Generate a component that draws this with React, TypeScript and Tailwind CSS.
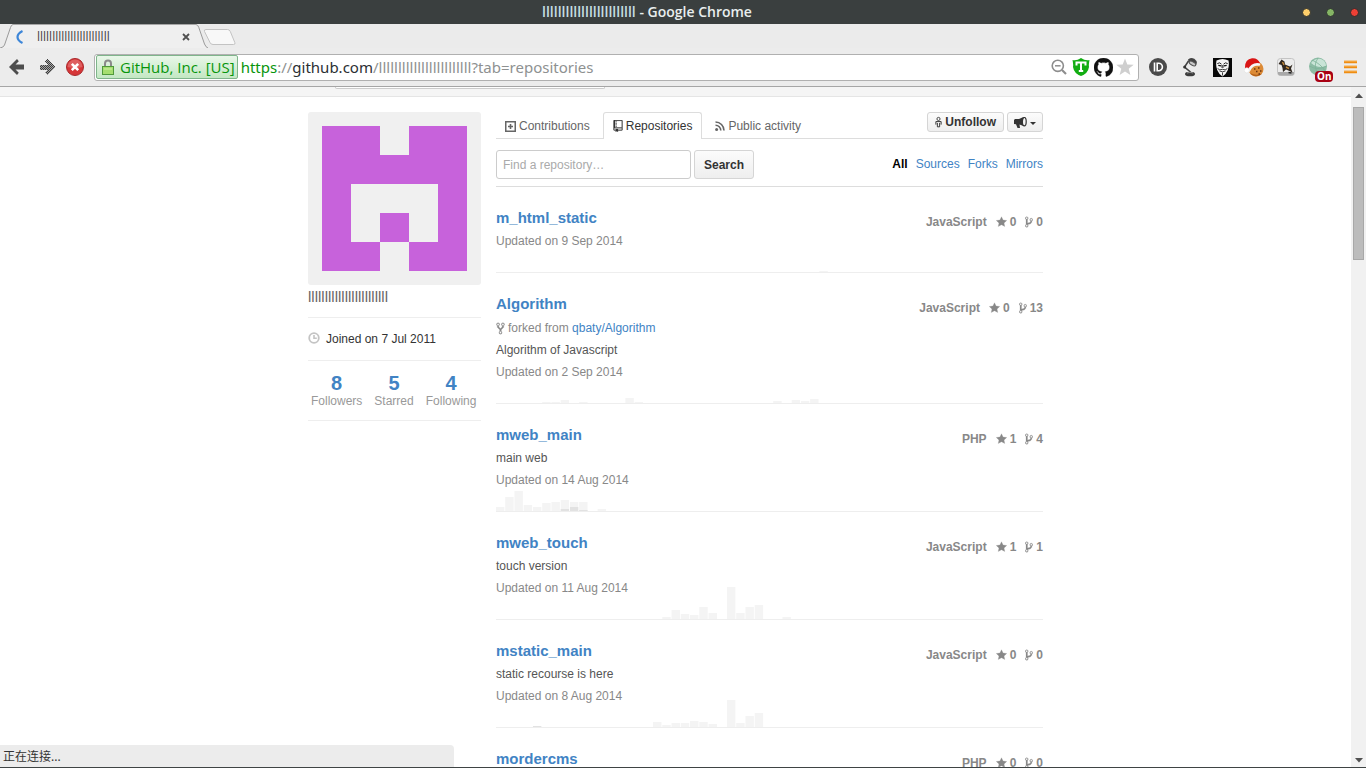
import React from "react";

const USER = "llllllllllllllllllllllll";

type Bar = [slot: number, height: number];
type Repo = {
  name: string;
  forkedFrom?: string;
  description?: string;
  updated: string;
  language: string;
  stars: number;
  forks: number;
  commits: Bar[];
  own?: Bar[];
};

const REPOS: Repo[] = [
  { name: "m_html_static", updated: "9 Sep 2014", language: "JavaScript", stars: 0, forks: 0, commits: [[35, 1]] },
  {
    name: "Algorithm",
    forkedFrom: "qbaty/Algorithm",
    description: "Algorithm of Javascript",
    updated: "2 Sep 2014",
    language: "JavaScript",
    stars: 0,
    forks: 13,
    commits: [[5, 1], [6, 1], [7, 3], [9, 1], [14, 5], [15, 1], [30, 2], [32, 3], [33, 2], [34, 4]],
  },
  {
    name: "mweb_main",
    description: "main web",
    updated: "14 Aug 2014",
    language: "PHP",
    stars: 1,
    forks: 4,
    commits: [[0, 4], [1, 14], [2, 20], [3, 6], [4, 4], [5, 8], [6, 9], [7, 11], [8, 9], [9, 9], [11, 2]],
    own: [[7, 2], [8, 4], [9, 1]],
  },
  {
    name: "mweb_touch",
    description: "touch version",
    updated: "11 Aug 2014",
    language: "JavaScript",
    stars: 1,
    forks: 1,
    commits: [[18, 2], [19, 9], [20, 5], [21, 4], [22, 12], [23, 6], [25, 32], [26, 6], [27, 12], [28, 14], [31, 2]],
  },
  {
    name: "mstatic_main",
    description: "static recourse is here",
    updated: "8 Aug 2014",
    language: "JavaScript",
    stars: 0,
    forks: 0,
    commits: [[17, 5], [18, 2], [19, 4], [20, 4], [21, 6], [22, 5], [23, 3], [25, 27], [26, 4], [27, 11], [28, 14]],
    own: [[4, 1]],
  },
  { name: "mordercms", updated: "5 Aug 2014", language: "PHP", stars: 0, forks: 0, commits: [] },
];

const BRANCH =
  "M10 5c0-1.11-.89-2-2-2a1.993 1.993 0 0 0-1 3.72v.3c-.02.52-.23.98-.63 1.38-.4.4-.86.61-1.38.63-.83.02-1.48.16-2 .45V4.72a1.993 1.993 0 0 0-1-3.72C.88 1 0 1.89 0 3a2 2 0 0 0 1 1.72v6.56c-.59.35-1 .99-1 1.72 0 1.11.89 2 2 2 1.11 0 2-.89 2-2 0-.53-.2-1-.53-1.36.09-.06.48-.41.59-.47.25-.11.56-.17.94-.17 1.05-.05 1.95-.45 2.75-1.25S8.95 7.77 9 6.73h-.02C9.59 6.37 10 5.73 10 5zM2 1.8c.66 0 1.2.55 1.2 1.2 0 .65-.55 1.2-1.2 1.2C1.35 4.2.8 3.65.8 3c0-.65.55-1.2 1.2-1.2zm0 12.41c-.66 0-1.2-.55-1.2-1.2 0-.65.55-1.2 1.2-1.2.65 0 1.2.55 1.2 1.2 0 .65-.55 1.2-1.2 1.2zm6-8c-.66 0-1.2-.55-1.2-1.2 0-.65.55-1.2 1.2-1.2.65 0 1.2.55 1.2 1.2 0 .65-.55 1.2-1.2 1.2z";
const FORK =
  "M8 1a1.993 1.993 0 0 0-1 3.72V6L5 8 3 6V4.72A1.993 1.993 0 0 0 2 1a1.993 1.993 0 0 0-1 3.72V6.5l3 3v1.78A1.993 1.993 0 0 0 5 15a1.993 1.993 0 0 0 1-3.72V9.5l3-3V4.72A1.993 1.993 0 0 0 8 1zM2 4.2C1.34 4.2.8 3.65.8 3c0-.65.55-1.2 1.2-1.2.65 0 1.2.55 1.2 1.2 0 .65-.55 1.2-1.2 1.2zm3 10c-.66 0-1.2-.55-1.2-1.2 0-.65.55-1.2 1.2-1.2.65 0 1.2.55 1.2 1.2 0 .65-.55 1.2-1.2 1.2zm3-10c-.66 0-1.2-.55-1.2-1.2 0-.65.55-1.2 1.2-1.2.65 0 1.2.55 1.2 1.2 0 .65-.55 1.2-1.2 1.2z";
const STAR = "M14 6l-4.9-.64L7 1 4.9 5.36 0 6l3.6 3.26L2.67 14 7 11.67 11.33 14l-.93-4.74L14 6z";
const REPO =
  "M4 9H3V8h1v1zm0-3H3v1h1V6zm0-2H3v1h1V4zm0-2H3v1h1V2zm8-1v12c0 .55-.45 1-1 1H6v2l-1.5-1.5L3 16v-2H1c-.55 0-1-.45-1-1V1c0-.55.45-1 1-1h10c.55 0 1 .45 1 1zm-1 10H1v2h2v-1h3v1h5v-2zm0-10H2v9h9V1z";
const MARK =
  "M8 0C3.58 0 0 3.58 0 8c0 3.54 2.29 6.53 5.47 7.59.4.07.55-.17.55-.38 0-.19-.01-.82-.01-1.49-2.01.37-2.53-.49-2.69-.94-.09-.23-.48-.94-.82-1.13-.28-.15-.68-.52-.01-.53.63-.01 1.08.58 1.23.82.72 1.21 1.87.87 2.33.66.07-.52.28-.87.51-1.07-1.78-.2-3.64-.89-3.64-3.95 0-.87.31-1.59.82-2.15-.08-.2-.36-1.02.08-2.12 0 0 .67-.21 2.2.82.64-.18 1.32-.27 2-.27.68 0 1.36.09 2 .27 1.53-1.04 2.2-.82 2.2-.82.44 1.1.16 1.92.08 2.12.51.56.82 1.27.82 2.15 0 3.07-1.87 3.75-3.65 3.95.29.25.54.73.54 1.48 0 1.07-.01 1.93-.01 2.2 0 .21.15.46.55.38A8.013 8.013 0 0 0 16 8c0-4.42-3.58-8-8-8z";

function Glyph({ d, w, className }: { d: string; w: number; className: string }) {
  return (
    <svg
      viewBox={`0 0 ${w} 16`}
      className={className}
      fill="currentColor"
      stroke="currentColor"
      strokeWidth=".3"
      aria-hidden="true"
    >
      <path d={d} />
    </svg>
  );
}

function TitleBar() {
  return (
    <header className="flex h-6 shrink-0 items-center bg-[#3a3f3f]">
      <h1 className="flex-1 text-center font-['Open_Sans',sans-serif] text-sm leading-6 font-semibold text-[#e8eeee]">
        <span className="text-[#c3dde0]">{USER}</span> - Google Chrome
      </h1>
      <div className="flex">
        {[
          ["Minimize", "bg-[#ffcf6b]"],
          ["Maximize", "bg-[#85b565]"],
          ["Close", "bg-[#ee4035]"],
        ].map(([label, color]) => (
          <button key={label} aria-label={label} className="flex h-6 w-6 items-center justify-center">
            <span className={`size-[9px] rounded-full border border-[#2a2e2e] ${color}`} />
          </button>
        ))}
      </div>
    </header>
  );
}

function TabStrip() {
  return (
    <div className="flex h-6 shrink-0 bg-[#ebebeb]">
      <svg viewBox="0 0 13 24" className="h-6 w-[13px]" aria-hidden="true">
        <path d="M0 24Q3.500 23.500 4.500 21L10.500 3.500Q11.300 1 13 .5V24z" fill="#efefef" />
        <path d="M0 24Q3.500 23.500 4.500 21L10.500 3.500Q11.300 .8 13 .5" fill="none" stroke="#9a9a9a" />
      </svg>
      <div className="flex w-[183px] items-center border-t border-[#a5a5a5] bg-[#efefef]">
        <svg viewBox="0 0 8 14" className="ml-[3px] h-[14px] w-2" aria-hidden="true">
          <path d="M6.500 1Q1.500 3.500 1.500 7t5 6" fill="none" stroke="#3d86d8" strokeWidth="2.200" />
        </svg>
        <span className="ml-[13px] flex-1 font-['Open_Sans',sans-serif] text-xs leading-5 text-[#444]">{USER}</span>
        <button aria-label="Close tab" className="mr-[3px] flex size-[14px] items-center justify-center">
          <svg viewBox="0 0 8 8" className="size-2" aria-hidden="true">
            <path d="M1 1l6 6M7 1L1 7" stroke="#505050" strokeWidth="1.800" />
          </svg>
        </button>
      </div>
      <svg viewBox="0 0 42 24" className="h-6 w-[42px]" aria-hidden="true">
        <path d="M0 .5Q2 1 2.800 3.500L8.500 20Q10 23.500 12 24H0z" fill="#efefef" />
        <path d="M0 .5Q2 .8 2.800 3.500L8.500 20Q10 23.500 12 24" fill="none" stroke="#9a9a9a" />
        <path
          d="M10 5.500h21.500q2 0 2.800 2l4.500 11q.9 2-1.300 2H17q-2.200 0-3-2L8.500 7.500q-.8-2 1.500-2z"
          fill="#f8f8f8"
          stroke="#c3c3c3"
        />
      </svg>
    </div>
  );
}

function Extensions() {
  const cell = "flex h-6 w-8 items-center justify-center";
  return (
    <div className="ml-[3px] flex">
      <button aria-label="Reader" className={cell}>
        <svg viewBox="0 0 18 18" className="size-[18px]">
          <circle cx="9" cy="9" r="9" fill="#4a4a4a" />
          <path d="M5.500 4.500v9" stroke="#fff" strokeWidth="1.600" />
          <path d="M9 5.200h.6a3.800 3.800 0 0 1 0 7.600H8.200V5.200z" fill="none" stroke="#fff" strokeWidth="1.600" />
        </svg>
      </button>
      <button aria-label="Lamp" className={cell}>
        <svg viewBox="0 0 18 20" className="h-5 w-[18px]">
          <path d="M7 2.500q5-3.500 8.500 1.500 1 3-1 4.500L7.500 5z" fill="#444" />
          <ellipse cx="11.500" cy="6.500" rx="3.600" ry="1.700" fill="#c9c9c9" stroke="#555" transform="rotate(28 11.500 6.500)" />
          <path d="M7.500 4L3.500 10l6 5" fill="none" stroke="#444" strokeWidth="1.600" />
          <circle cx="3.700" cy="10" r="1.500" fill="#333" />
          <ellipse cx="9" cy="17" rx="5" ry="2.300" fill="#3c3c3c" />
          <path d="M6 16q3-1.500 6 0" fill="none" stroke="#aaa" strokeWidth=".8" />
        </svg>
      </button>
      <button aria-label="Mask" className={cell}>
        <svg viewBox="0 0 19 19" className="size-[19px]">
          <path fill="#080808" d="M0 0h19v19H0z" />
          <path d="M3.500 2.500Q9.500-.5 15.500 2.500q1 5.500-.8 9.800-1.700 4.200-5.200 6.200-3.500-2-5.200-6.200-1.800-4.300-.8-9.800z" fill="#f4f4f4" />
          <path d="M4.300 5.600q2.500-1.800 4.200.6M14.700 5.600q-2.500-1.800-4.200.6" fill="none" stroke="#111" strokeWidth=".9" />
          <path d="M5.300 7.400l2.900.5M10.800 7.900l2.900-.5" stroke="#111" strokeWidth="1.100" />
          <path d="M9 7v3M10 7v3M4.600 10.500q2 2.300 4.900.8 2.900 1.500 4.900-.8M6.500 13q3 1.600 6 0M9.500 14.500v3" fill="none" stroke="#111" strokeWidth=".8" />
        </svg>
      </button>
      <button aria-label="Cookies" className={cell}>
        <svg viewBox="0 0 20 19" className="h-[19px] w-5">
          <circle cx="12" cy="11" r="7.500" fill="#dc8a35" />
          <path d="M6 15a7.500 7.500 0 0 0 12 .5q-6 2.500-12-.5z" fill="#b5621b" />
          <path d="M10 11h1.500M14 10h1.500M12 13.500h1.500M16 13h1.500M14.500 16h1.500" stroke="#6b3510" strokeWidth="1.400" />
          <path d="M1 10.500Q.5 1.500 8 .3q5.500-.6 8 4.700L12 8Q7 7 4.500 11.500z" fill="#d91414" />
          <path d="M15 6.500Q8 5.500 5 12.500" fill="none" stroke="#f6f6f6" strokeWidth="2.600" strokeLinecap="round" />
          <circle cx="2.800" cy="12.300" r="2.600" fill="#fff" stroke="#ddd" strokeWidth=".6" />
        </svg>
      </button>
      <button aria-label="Dog" className={cell}>
        <svg viewBox="0 0 18 18" className="size-[18px]">
          <rect x=".5" y=".5" width="17" height="17" rx="3" fill="#ececec" stroke="#c4c4c4" />
          <path d="M1 14h16v1.500q0 2-2 2H3q-2 0-2-2z" fill="#a9a9a9" />
          <path d="M4.500 1.500l3 2 .5 3 5 2 2.500-2-1.500 4 1.500 4-3-1.500-3.500-1.500L6 14l-.5-4-1-3-3-1z" fill="#30271f" />
          <path d="M5.500 4l1.500 3M9 9l3 1.500" stroke="#c58a3a" strokeWidth="1.400" />
          <path d="M11.500 14.500l3 .5" stroke="#222" strokeWidth="1.300" />
        </svg>
      </button>
      <button aria-label="Proxy on" className={`${cell} relative`}>
        <svg viewBox="0 0 20 20" className="size-5">
          <circle cx="10" cy="9.500" r="9" fill="#8dbca5" />
          <path d="M3 6q4-5 10-4 5 2 5 7-8 3-15-3z" fill="#c9e4d7" />
          <path d="M1.500 9q8 5 17 0M10 1q-6 8 1 17M4 3q9 4 13 11" fill="none" stroke="#7db398" strokeWidth=".8" />
        </svg>
        <span className="absolute top-4 left-[13px] rounded-sm bg-[#a80013] px-[2px] text-[10px] leading-[11px] font-bold text-white">
          On
        </span>
      </button>
      <button aria-label="Menu" className={cell}>
        <svg viewBox="0 0 13 14" className="h-[14px] w-[13px]">
          <path d="M0 2h13M0 7h13M0 12h13" stroke="#ef8d12" strokeWidth="2.600" />
          <path d="M0 1.200h13M0 6.200h13M0 11.200h13" stroke="#f7b65c" strokeWidth=".8" />
        </svg>
      </button>
    </div>
  );
}

function Toolbar() {
  return (
    <div className="flex h-[39px] shrink-0 items-center border-b border-[#a6a6a6] bg-[#ececec] pl-2">
      <button aria-label="Back" className="flex h-6 w-[17px] items-center justify-center">
        <svg viewBox="0 0 16 16" className="size-4">
          <path d="M0 8l8-8 1.800 2.300-3.300 3.200H15v5H6.500l3.300 3.200L8 16z" fill="#4d4d4d" />
        </svg>
      </button>
      <button aria-label="Forward" className="ml-[13px] flex h-6 w-[17px] items-center justify-center">
        <svg viewBox="0 0 16 16" className="size-4" shapeRendering="crispEdges">
          <defs>
            <pattern id="dither" width="2" height="2" patternUnits="userSpaceOnUse">
              <path d="M0 0h2v2H0z" fill="#a5a5a5" />
              <path d="M0 0h1v1H0zM1 1h1v1H1z" fill="#3d3d3d" />
            </pattern>
          </defs>
          <path d="M16 8L8 0 6.200 2.300l3.300 3.200H1v5h8.500l-3.300 3.200L8 16z" fill="url(#dither)" />
        </svg>
      </button>
      <button aria-label="Stop" className="ml-[11px] flex size-[18px] items-center justify-center">
        <svg viewBox="0 0 18 18" className="size-[18px]">
          <circle cx="9" cy="9" r="8.500" fill="#d63638" stroke="#a8282a" />
          <path d="M1.500 9a7.500 7.500 0 0 1 15 0q-7.500 2-15 0z" fill="#df5f60" />
          <path d="M5.800 5.800l6.400 6.400M12.200 5.800l-6.400 6.400" stroke="#fff" strokeWidth="2.600" />
        </svg>
      </button>
      <div className="ml-[10px] flex h-[27px] flex-1 items-center rounded-[3px] border border-[#b0b0b0] bg-white pr-[2px] pl-px text-[15px]">
        <button className="flex h-6 items-center rounded-[2px] border border-[#7fb58b] bg-linear-to-b from-[#e9f7e9] to-[#c3e7c3] pr-[2px] pl-[5px] font-['Open_Sans',sans-serif] leading-5 text-[#07950b]">
          <svg viewBox="0 0 12 16" className="mr-[6px] h-4 w-3" aria-hidden="true">
            <path d="M3 8V4.500a3 3 0 0 1 6 0V8" fill="none" stroke="#8b8b8b" strokeWidth="2" />
            <rect x=".5" y="7.500" width="11" height="8" fill="#a5de6f" stroke="#4f9a3a" />
            <path d="M2 10h8" stroke="#cdf2a8" />
          </svg>
          GitHub, Inc. [US]
        </button>
        <div
          role="textbox"
          aria-label="Address"
          contentEditable
          suppressContentEditableWarning
          className="ml-[3px] min-w-0 flex-1 overflow-hidden leading-6 whitespace-nowrap text-[#8e9191] outline-none"
        >
          <span className="text-[#07950b]">https</span>://<span className="text-[#2b2f33]">github.com</span>/{USER}
          ?tab=repositories
        </div>
        <button aria-label="Zoom" className="flex w-[22px] justify-center">
          <svg viewBox="0 0 16 16" className="size-4">
            <circle cx="6.800" cy="6.800" r="5.600" fill="none" stroke="#8d8d8d" strokeWidth="1.600" />
            <path d="M4 6.800h5.600" stroke="#8d8d8d" strokeWidth="1.500" />
            <path d="M11 11l4 4" stroke="#8d8d8d" strokeWidth="2.200" />
          </svg>
        </button>
        <button aria-label="Shield" className="flex w-[22px] justify-center">
          <svg viewBox="0 0 18 18" className="size-[18px]">
            <path d="M.5 2Q5 2.800 9 0q4 2.800 8.500 2Q16.500 7 17 9q-1 6.500-8 9-7-2.500-8-9Q1.500 7 .5 2z" fill="#12ad12" />
            <path d="M4.500 7.500v-3h9v3M9 5v7.500M6.800 13h4.400" fill="none" stroke="#fff" strokeWidth="2" />
          </svg>
        </button>
        <button aria-label="GitHub" className="flex w-[22px] justify-center text-[#111]">
          <Glyph d={MARK} w={16} className="size-[19px]" />
        </button>
        <button aria-label="Bookmark" className="flex w-[22px] justify-center">
          <svg viewBox="0 0 18 18" className="size-[18px]">
            <path d="M9 .5l2.300 6 6.400.3-5 4 1.700 6.200L9 13.500 3.600 17l1.700-6.200-5-4 6.400-.3z" fill="#cfcfcf" />
          </svg>
        </button>
      </div>
      <Extensions />
    </div>
  );
}

const IDENTICON = ["11011", "11111", "10001", "10101", "11011"];

function Sidebar() {
  return (
    <aside className="w-[173px] shrink-0">
      <svg viewBox="0 0 420 420" className="block size-[173px] rounded-[3px] bg-[#f0f0f0]" role="img" aria-label="Avatar" shapeRendering="crispEdges">
        {IDENTICON.flatMap((row, y) =>
          [...row].map((c, x) =>
            c === "1" ? <rect key={`${x}-${y}`} x={35 + x * 70} y={35 + y * 70} width="70" height="70" fill="#c762db" /> : null,
          ),
        )}
      </svg>
      <p className="border-b border-[#eee] pt-[2px] pb-[10px] text-[15px] leading-5 text-[#666]">{USER}</p>
      <p className="flex h-[43px] items-center border-b border-[#eee] text-[#333]">
        <svg viewBox="0 0 12 12" className="mr-[6px] mb-[3px] size-3" aria-hidden="true">
          <circle cx="6" cy="6" r="4.800" fill="none" stroke="#c4c4c4" strokeWidth="1.800" />
          <path d="M6 3v3.200h2.800" fill="none" stroke="#c4c4c4" strokeWidth="1.600" />
        </svg>
        Joined on 7 Jul 2011
      </p>
      <div className="flex gap-3 border-b border-[#eee] px-[3px] pt-3 pb-[10px] text-center">
        {[
          ["8", "Followers"],
          ["5", "Starred"],
          ["4", "Following"],
        ].map(([n, label]) => (
          <a key={label} href="#" className="text-[#999]">
            <strong className="block text-xl leading-5 text-[#4183c4]">{n}</strong>
            <span className="block leading-[17px]">{label}</span>
          </a>
        ))}
      </div>
    </aside>
  );
}

const smallButton =
  "flex h-5 items-center rounded-[3px] border border-[#d5d5d5] bg-linear-to-b from-[#fcfcfc] to-[#eee] font-bold text-[#333]";

function ProfileNav() {
  return (
    <div className="flex h-[27px] items-start justify-between border-b border-[#ddd]">
      <nav className="flex gap-[3px] text-[#666]">
        <a href="#" className="flex h-[27px] items-center border-x border-transparent px-2 pt-px">
          <svg viewBox="0 0 11 11" className="mr-[3px] size-[11px]" aria-hidden="true">
            <path d="M.75.75h9.500v9.500H.75z" fill="none" stroke="currentColor" strokeWidth="1.500" />
            <path d="M5.500 3v5M3 5.500h5" stroke="currentColor" strokeWidth="1.600" />
          </svg>
          Contributions
        </a>
        <a href="#" className="ml-px flex h-[27px] items-center rounded-t-[3px] border border-b-0 border-[#ddd] bg-white px-[9px] text-[#333]">
          <Glyph d={REPO} w={12} className="mr-[3px] h-3 w-[10px]" />
          Repositories
        </a>
        <a href="#" className="flex h-[27px] items-center border-x border-transparent px-[9px] pt-px">
          <svg viewBox="0 0 10 10" className="mr-[3px] size-[10px]" aria-hidden="true">
            <circle cx="1.600" cy="8.400" r="1.500" fill="currentColor" />
            <path d="M.5 4.200a5.300 5.300 0 0 1 5.300 5.300M.5 1a8.500 8.500 0 0 1 8.500 8.500" fill="none" stroke="currentColor" strokeWidth="1.600" />
          </svg>
          Public activity
        </a>
      </nav>
      <div className="flex gap-[3px]">
        <button className={`${smallButton} px-[7px]`}>
          <svg viewBox="0 0 8 12" className="mr-[3px] h-3 w-[7px]" aria-hidden="true">
            <circle cx="4" cy="2.500" r="1.800" fill="none" stroke="#333" />
            <path d="M1 9V5.500h6V9M2.700 7v4.500h2.600V7" fill="none" stroke="#333" strokeWidth="1.100" />
          </svg>
          Unfollow
        </button>
        <button aria-label="Report" className={`${smallButton} px-[6px]`}>
          <svg viewBox="0 0 13 11" className="h-[11px] w-[13px]" aria-hidden="true">
            <path d="M0 3l1-1 4 0L9.500 0q-1.500 4.500 0 9L5.500 7.500 6 11H3.500L2 7.300 0 7z" fill="#333" />
            <ellipse cx="10.300" cy="4.700" rx="1.900" ry="4.200" fill="none" stroke="#333" strokeWidth="1.200" />
          </svg>
          <svg viewBox="0 0 6 3" className="mt-[2px] ml-[3px] h-[3px] w-[6px]" aria-hidden="true">
            <path d="M0 0h6L3 3z" fill="#333" />
          </svg>
        </button>
      </div>
    </div>
  );
}

function Filters() {
  return (
    <form className="flex h-12 items-start border-b border-[#ddd] pt-[11px]" onSubmit={(e) => e.preventDefault()}>
      <input
        type="text"
        aria-label="Find a repository"
        placeholder="Find a repository…"
        className="h-[29px] w-[195px] rounded-[3px] border border-[#ccc] px-[6px] text-[#333] placeholder:text-[#aaa]"
      />
      <button className="ml-[3px] h-[29px] rounded-[3px] border border-[#d5d5d5] bg-linear-to-b from-[#fcfcfc] to-[#eee] px-[9px] font-bold text-[#333]">
        Search
      </button>
      <div className="ml-auto flex gap-2 pt-1 leading-5 text-[#4183c4]">
        <a href="#" className="font-bold text-black">All</a>
        <a href="#">Sources</a>
        <a href="#">Forks</a>
        <a href="#">Mirrors</a>
      </div>
    </form>
  );
}

function Activity({ commits, own = [] }: { commits: Bar[]; own?: Bar[] }) {
  const draw = (bars: Bar[], fill: string) =>
    bars.map(([slot, h]) => <rect key={`${fill}${slot}`} x={slot * 9.24} y={40 - h} width="8.4" height={h} fill={fill} />);
  return (
    <svg viewBox="0 0 547 40" preserveAspectRatio="none" className="absolute bottom-0 left-0 h-10 w-full" aria-hidden="true">
      {draw(commits, "#f4f4f4")}
      {draw(own, "#e2e2e2")}
    </svg>
  );
}

function RepoItem({ repo }: { repo: Repo }) {
  return (
    <li className="relative border-b border-[#eee] py-5">
      <Activity commits={repo.commits} own={repo.own} />
      <div className="relative flex justify-between">
        <h3 className="mb-px text-[15px] leading-[22px] font-bold text-[#4183c4]">
          <a href="#">{repo.name}</a>
        </h3>
        <div className="flex h-[22px] items-center gap-[9px] pt-2 font-bold text-[#888]">
          <span>{repo.language}</span>
          <a href="#" aria-label="Stars" className="flex items-center gap-[3px]">
            <Glyph d={STAR} w={14} className="h-3 w-[11px]" />
            {repo.stars}
          </a>
          <a href="#" aria-label="Forks" className="flex items-center gap-[3px]">
            <Glyph d={BRANCH} w={10} className="h-3 w-2" />
            {repo.forks}
          </a>
        </div>
      </div>
      {repo.forkedFrom && (
        <p className="relative flex h-[23px] items-center pt-px text-[#888]">
          <Glyph d={FORK} w={10} className="mr-[3px] h-[13px] w-[9px]" />
          <span>
            forked from <a href="#" className="text-[#4183c4]">{repo.forkedFrom}</a>
          </span>
        </p>
      )}
      {repo.description && <p className="relative leading-[22px] text-[#555]">{repo.description}</p>}
      <p className="relative leading-[22px] text-[#888]">Updated on {repo.updated}</p>
    </li>
  );
}

function Scrollbar() {
  return (
    <div className="flex w-[15px] shrink-0 flex-col items-center bg-[#f1f1f1]" aria-hidden="true">
      <svg viewBox="0 0 8 5" className="mt-[6px] h-[5px] w-2 shrink-0">
        <path d="M0 5l4-4.500L8 5z" fill="#505050" />
      </svg>
      <div className="mt-[9px] h-[153px] w-[11px] shrink-0 border border-[#a8a8a8] bg-[#bcbcbc]" />
      <svg viewBox="0 0 8 5" className="mt-auto mb-1 h-[5px] w-2 shrink-0">
        <path d="M0 0l4 4.500L8 0z" fill="#505050" />
      </svg>
    </div>
  );
}

export default function App() {
  return (
    <div className="relative flex h-screen flex-col overflow-hidden border-b border-[#3f4444] bg-white font-['Noto_Sans','Noto_Sans_CJK_SC',sans-serif]">
      <TitleBar />
      <TabStrip />
      <Toolbar />
      <div className="flex min-h-0 flex-1">
        <div className="min-w-0 flex-1 overflow-hidden font-['Liberation_Sans',Arial,sans-serif] text-xs">
          <div className="h-[10px] border-b border-[#e5e5e5] bg-[#f5f5f5]">
            <div className="mx-auto w-[735px]">
              <div className="ml-[27px] h-[2px] w-[270px] rounded-b-[3px] border border-t-0 border-[#ccc] bg-white" />
            </div>
          </div>
          <div className="mx-auto flex w-[735px] gap-[15px] pt-[15px]">
            <Sidebar />
            <main className="min-w-0 flex-1">
              <ProfileNav />
              <Filters />
              <ul>
                {REPOS.map((repo) => (
                  <RepoItem key={repo.name} repo={repo} />
                ))}
              </ul>
            </main>
          </div>
        </div>
        <Scrollbar />
      </div>
      <div role="status" className="absolute bottom-0 left-0 h-[22px] w-[454px] rounded-tr-[4px] bg-[#ececec] pl-[3px] text-xs leading-6 text-[#333]">
        正在连接...
      </div>
    </div>
  );
}
